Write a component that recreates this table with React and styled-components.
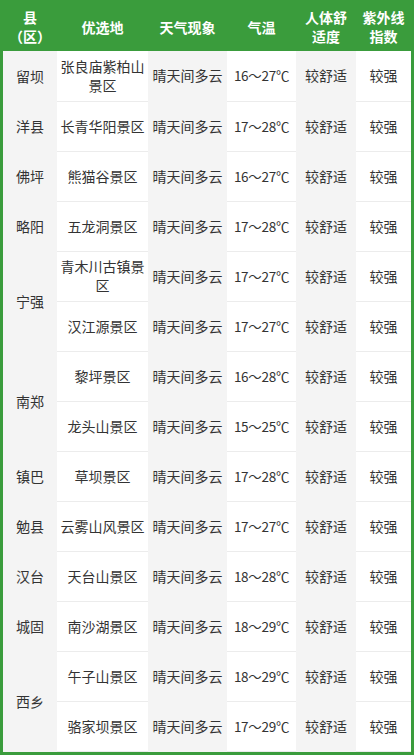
import React from "react";
import styled, { createGlobalStyle } from "styled-components";

const Global = createGlobalStyle`
  html, body { margin: 0; padding: 0; background: #ffffff; }
  body { font-family: "Noto Sans CJK SC", "Noto Sans", sans-serif; }
`;

const GREEN = "#3a9c3c";

const Frame = styled.div`
  width: 414px;
  box-sizing: border-box;
  border: 3px solid ${GREEN};
  background: #f4f4f4;
`;

const Table = styled.table`
  width: 100%;
  border-collapse: collapse;
  table-layout: fixed;
`;

const HeadCell = styled.th`
  background: ${GREEN};
  color: #ffffff;
  font-size: 14px;
  font-weight: bold;
  line-height: 19px;
  height: 48px;
  padding: 0 2px;
  text-align: center;
  vertical-align: middle;
  box-sizing: border-box;
`;

const Cell = styled.td`
  background: ${(p) => (p.$white ? "#ffffff" : "#f4f4f4")};
  color: #333333;
  font-size: 14px;
  line-height: 19px;
  height: 50px;
  padding: 0 3px;
  text-align: center;
  vertical-align: middle;
  box-sizing: border-box;
  border-bottom: 1px solid ${(p) => (p.$white ? "#ececec" : "#f4f4f4")};
`;

const CountyCell = styled(Cell)`
  border-bottom: none;
`;

const Temp = styled.span`
  font-size: 13.5px;
  white-space: nowrap;
  letter-spacing: -0.3px;
`;

const groups = [
  { county: "留坝", spots: [["张良庙紫柏山景区", "16～27℃"]] },
  { county: "洋县", spots: [["长青华阳景区", "17～28℃"]] },
  { county: "佛坪", spots: [["熊猫谷景区", "16～27℃"]] },
  { county: "略阳", spots: [["五龙洞景区", "17～28℃"]] },
  { county: "宁强", spots: [["青木川古镇景区", "17～27℃"], ["汉江源景区", "17～27℃"]] },
  { county: "南郑", spots: [["黎坪景区", "16～28℃"], ["龙头山景区", "15～25℃"]] },
  { county: "镇巴", spots: [["草坝景区", "17～28℃"]] },
  { county: "勉县", spots: [["云雾山风景区", "17～27℃"]] },
  { county: "汉台", spots: [["天台山景区", "18～28℃"]] },
  { county: "城固", spots: [["南沙湖景区", "18～29℃"]] },
  { county: "西乡", spots: [["午子山景区", "18～29℃"], ["骆家坝景区", "17～29℃"]] },
];

export default function App() {
  return (
    <>
      <Global />
      <Frame>
        <Table>
          <colgroup>
            <col style={{ width: 54 }} />
            <col style={{ width: 91 }} />
            <col style={{ width: 79 }} />
            <col style={{ width: 69 }} />
            <col style={{ width: 60 }} />
            <col style={{ width: 55 }} />
          </colgroup>
          <thead>
            <tr>
              <HeadCell>县<br />（区）</HeadCell>
              <HeadCell>优选地</HeadCell>
              <HeadCell>天气现象</HeadCell>
              <HeadCell>气温</HeadCell>
              <HeadCell>人体舒<br />适度</HeadCell>
              <HeadCell>紫外线<br />指数</HeadCell>
            </tr>
          </thead>
          <tbody>
            {groups.map((g) =>
              g.spots.map(([spot, temp], i) => (
                <tr key={spot}>
                  {i === 0 && (
                    <CountyCell rowSpan={g.spots.length}>{g.county}</CountyCell>
                  )}
                  <Cell $white>{spot}</Cell>
                  <Cell>晴天间多云</Cell>
                  <Cell $white><Temp>{temp}</Temp></Cell>
                  <Cell>较舒适</Cell>
                  <Cell $white>较强</Cell>
                </tr>
              ))
            )}
          </tbody>
        </Table>
      </Frame>
    </>
  );
}
